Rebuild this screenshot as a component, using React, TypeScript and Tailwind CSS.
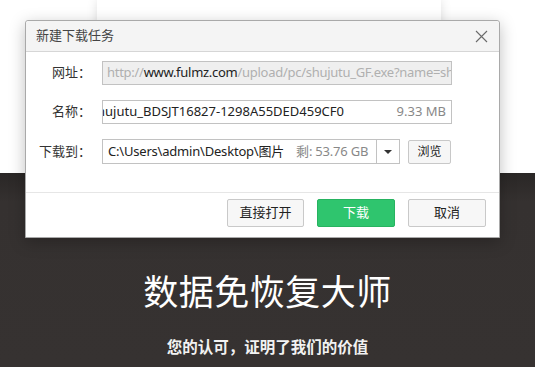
import React from "react";

const font = { fontFamily: '"Noto Sans", "Noto Sans CJK SC", sans-serif' };

function CloseIcon() {
  return (
    <svg width="13" height="13" viewBox="0 0 13 13" className="text-[#6a6a6a]">
      <path d="M1 1 L12 12 M12 1 L1 12" stroke="currentColor" strokeWidth="1.1" fill="none" />
    </svg>
  );
}

function Row({ label, children }: { label: string; children: React.ReactNode }) {
  return (
    <div className="flex items-center">
      <div className="w-[66px] text-right text-[13px] text-[#333] pr-[1px]">{label}</div>
      <div className="ml-[10px] flex items-center">{children}</div>
    </div>
  );
}

function Dialog() {
  return (
    <div className="absolute left-[25px] top-[20px] w-[475px] h-[218px] bg-white border border-[#a9a9a9] rounded-t-[3px] shadow-[0_4px_16px_rgba(0,0,0,0.25)] flex flex-col">
      <div className="h-[31px] bg-[#f4f4f4] border-b border-[#d6d6d6] flex items-center justify-between pl-[10px] pr-[11px] rounded-t-[3px]">
        <span className="text-[13px] text-[#444]">新建下载任务</span>
        <CloseIcon />
      </div>
      <div className="flex flex-col pt-[9px] gap-[15px] h-[140px]">
        <Row label="网址：">
          <div className="w-[350px] h-[24px] bg-[#efefef] border border-[#c2c2c2] flex items-center px-[4px] overflow-hidden whitespace-nowrap text-[13px] tracking-[-0.28px]">
            <span className="text-[#b0b0b0]">http://</span>
            <span className="text-[#222]">www.fulmz.com</span>
            <span className="text-[#b0b0b0]">/upload/pc/shujutu_GF.exe?name=sh</span>
          </div>
        </Row>
        <Row label="名称：">
          <div className="w-[350px] h-[24px] bg-white border border-[#c2c2c2] flex items-center justify-between pr-[5px] overflow-hidden whitespace-nowrap text-[13px]">
            <span className="text-[#222] -ml-[6px]">hujutu_BDSJT16827-1298A55DED459CF0</span>
            <span className="text-[#888]">9.33 MB</span>
          </div>
        </Row>
        <Row label="下载到：">
          <div className="w-[298px] h-[25px] bg-white border border-[#c2c2c2] flex items-center whitespace-nowrap text-[13px] tracking-[-0.2px]">
            <div className="flex-1 flex items-center pl-[5px] overflow-hidden">
              <span className="text-[#222]">C:\Users\admin\Desktop\图片</span>
              <span className="text-[#888] ml-[12px]">剩: 53.76 GB</span>
            </div>
            <div className="w-[23px] h-full border-l border-[#c2c2c2] flex items-center justify-center">
              <div className="w-0 h-0 border-l-[4px] border-r-[4px] border-t-[4px] border-l-transparent border-r-transparent border-t-[#333]" />
            </div>
          </div>
          <button className="ml-[8px] w-[43px] h-[24px] bg-[#f6f6f6] border border-[#c8c8c8] rounded-[2px] text-[12px] text-[#222] flex items-center justify-center">
            浏览
          </button>
        </Row>
      </div>
      <div className="border-t border-[#e6e6e6] flex-1 flex items-start justify-end pt-[6px] pr-[13px] gap-[13px]">
        <button className="w-[77px] h-[28px] bg-[#f7f7f7] border border-[#c9c9c9] rounded-[2px] text-[13px] text-[#222]">
          直接打开
        </button>
        <button className="w-[78px] h-[28px] bg-[#2fc56e] border border-[#27b360] rounded-[2px] text-[13px] text-white">
          下载
        </button>
        <button className="w-[78px] h-[28px] bg-[#f7f7f7] border border-[#c9c9c9] rounded-[2px] text-[13px] text-[#222]">
          取消
        </button>
      </div>
    </div>
  );
}

export default function App() {
  return (
    <div className="relative w-[535px] h-[367px] overflow-hidden bg-white" style={font}>
      <div className="h-[173px] bg-white flex pl-[97px]">
        <div className="w-[344px] h-full bg-white shadow-[0_0_10px_rgba(0,0,0,0.13)]" />
      </div>
      <div className="h-[194px] bg-gradient-to-b from-[#2a2726] via-[#353130] via-[15%] to-[#363231] flex flex-col items-center">
        <h1 className="mt-[99px] text-[35px] leading-[40px] text-white tracking-[0.5px]">数据免恢复大师</h1>
        <p className="mt-[24px] text-[15.5px] font-bold text-[#f2f2f2]">您的认可，证明了我们的价值</p>
      </div>
      <Dialog />
    </div>
  );
}
